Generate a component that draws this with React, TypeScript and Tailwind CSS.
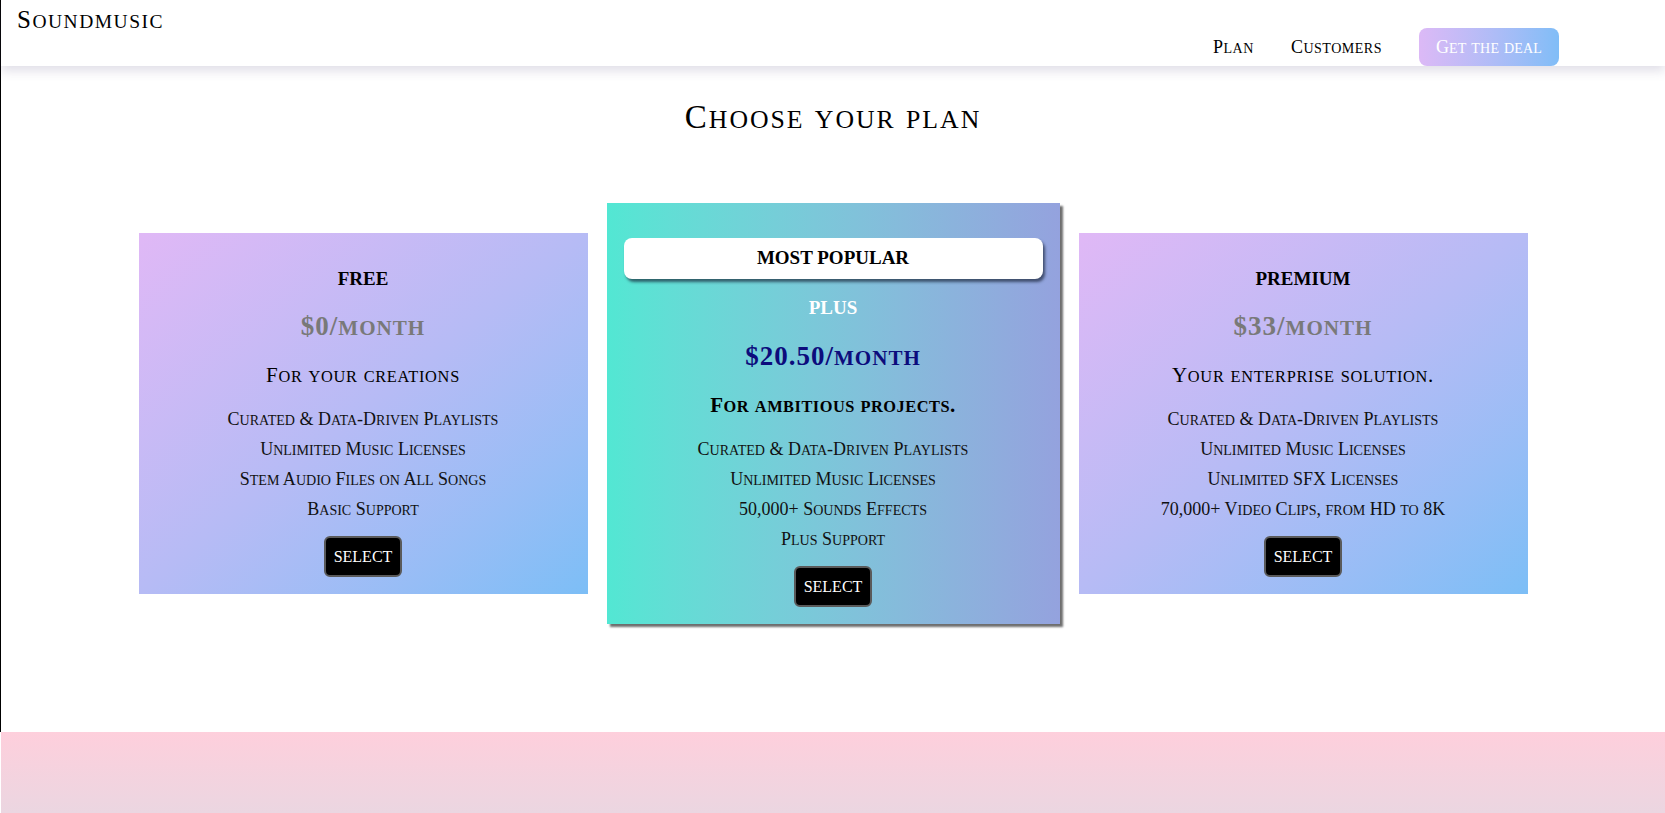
import React from "react";

type Plan = {
  name: string;
  price: string;
  tagline: string;
  features: string[];
};

const free: Plan = {
  name: "FREE",
  price: "$0/month",
  tagline: "For your creations",
  features: [
    "Curated & Data-Driven Playlists",
    "Unlimited Music Licenses",
    "Stem Audio Files on All Songs",
    "Basic Support",
  ],
};

const plus: Plan = {
  name: "PLUS",
  price: "$20.50/month",
  tagline: "For ambitious projects.",
  features: [
    "Curated & Data-Driven Playlists",
    "Unlimited Music Licenses",
    "50,000+ Sounds Effects",
    "Plus Support",
  ],
};

const premium: Plan = {
  name: "PREMIUM",
  price: "$33/month",
  tagline: "Your enterprise solution.",
  features: [
    "Curated & Data-Driven Playlists",
    "Unlimited Music Licenses",
    "Unlimited SFX Licenses",
    "70,000+ Video Clips, from HD to 8K",
  ],
};

// small caps: lowercase runs drawn as smaller capitals
const SC = ({ children }: { children: string }) => (
  <span>
    {children.split(/([a-z]+)/).map((part, i) =>
      /^[a-z]+$/.test(part) ? (
        <span key={i} className="uppercase text-[0.78em] leading-none">
          {part}
        </span>
      ) : (
        part
      )
    )}
  </span>
);

const SelectButton = () => (
  <button className="mt-3 w-[78px] h-[41px] bg-black text-white text-[16px] border-2 border-[#5a5a5a] rounded-md">
    SELECT
  </button>
);

const FeatureList = ({ items }: { items: string[] }) => (
  <ul className="mt-[17px] text-[18px] leading-[30px] text-[#111]">
    {items.map((f) => (
      <li key={f}>
        <SC>{f}</SC>
      </li>
    ))}
  </ul>
);

const SideCard = ({ plan }: { plan: Plan }) => (
  <div className="w-[449px] flex flex-col items-center text-center pt-[34px] pb-[17px] bg-linear-to-br from-[#e0b8f6] via-[#b6bbf5] to-[#7cbef6]">
    <h3 className="text-[19px] leading-[24px] font-bold">{plan.name}</h3>
    <h2 className="mt-[21px] text-[27px] leading-[28px] font-bold text-[#797979] tracking-[1px]">
      <SC>{plan.price}</SC>
    </h2>
    <p className="mt-[23px] text-[21px] leading-[24px] tracking-[0.7px]">
      <SC>{plan.tagline}</SC>
    </p>
    <FeatureList items={plan.features} />
    <SelectButton />
  </div>
);

const PopularCard = ({ plan }: { plan: Plan }) => (
  <div className="w-[453px] flex flex-col items-center text-center px-[17px] pt-[35px] pb-[17px] bg-linear-to-r from-[#52e7d3] to-[#94a2de] shadow-[3px_3px_2px_#6e6e6e]">
    <div className="w-full h-[41px] flex items-center justify-center bg-white rounded-lg shadow-[2px_3px_3px_rgba(20,30,50,0.65)]">
      <span className="text-[19px] font-bold">MOST POPULAR</span>
    </div>
    <h3 className="mt-[17px] text-[19px] leading-[24px] font-bold text-white">{plan.name}</h3>
    <h2 className="mt-[22px] text-[27px] leading-[28px] font-bold text-[#0c0c7c] tracking-[1px]">
      <SC>{plan.price}</SC>
    </h2>
    <p className="mt-[23px] text-[21px] leading-[24px] font-bold tracking-[0.5px]">
      <SC>{plan.tagline}</SC>
    </p>
    <FeatureList items={plan.features} />
    <SelectButton />
  </div>
);

export default function App() {
  return (
    <div className="min-h-[813px] bg-white text-black font-['Liberation_Serif',serif]">
      <div className="border-l border-black">
        <header className="relative z-10 h-[66px] flex justify-between bg-white shadow-[0_5px_10px_rgba(90,80,130,0.18)]">
          <div className="pl-4 pt-[6px] text-[25px] leading-[28px] tracking-[1.5px]">
            <SC>Soundmusic</SC>
          </div>
          <nav className="self-end flex items-center gap-[37px] pr-[106px] text-[18px] tracking-[0.5px]">
            <a href="#">
              <SC>Plan</SC>
            </a>
            <a href="#">
              <SC>Customers</SC>
            </a>
            <a
              href="#"
              className="h-[38px] w-[140px] flex items-center justify-center rounded-lg text-white tracking-[0.2px] bg-linear-to-r from-[#dcb9f6] to-[#80bdf7]"
            >
              <SC>Get the deal</SC>
            </a>
          </nav>
        </header>

        <main className="flex flex-col items-center pb-[108px]">
          <h1 className="mt-[31px] text-[33px] leading-[40px] tracking-[2px]">
            <SC>Choose your plan</SC>
          </h1>
          <section className="mt-[66px] flex items-center gap-[19px]">
            <SideCard plan={free} />
            <PopularCard plan={plus} />
            <SideCard plan={premium} />
          </section>
        </main>
      </div>
      <footer className="h-[81px] border-l border-white bg-linear-to-b from-[#fecfdc] to-[#ebd6e1]" />
    </div>
  );
}
